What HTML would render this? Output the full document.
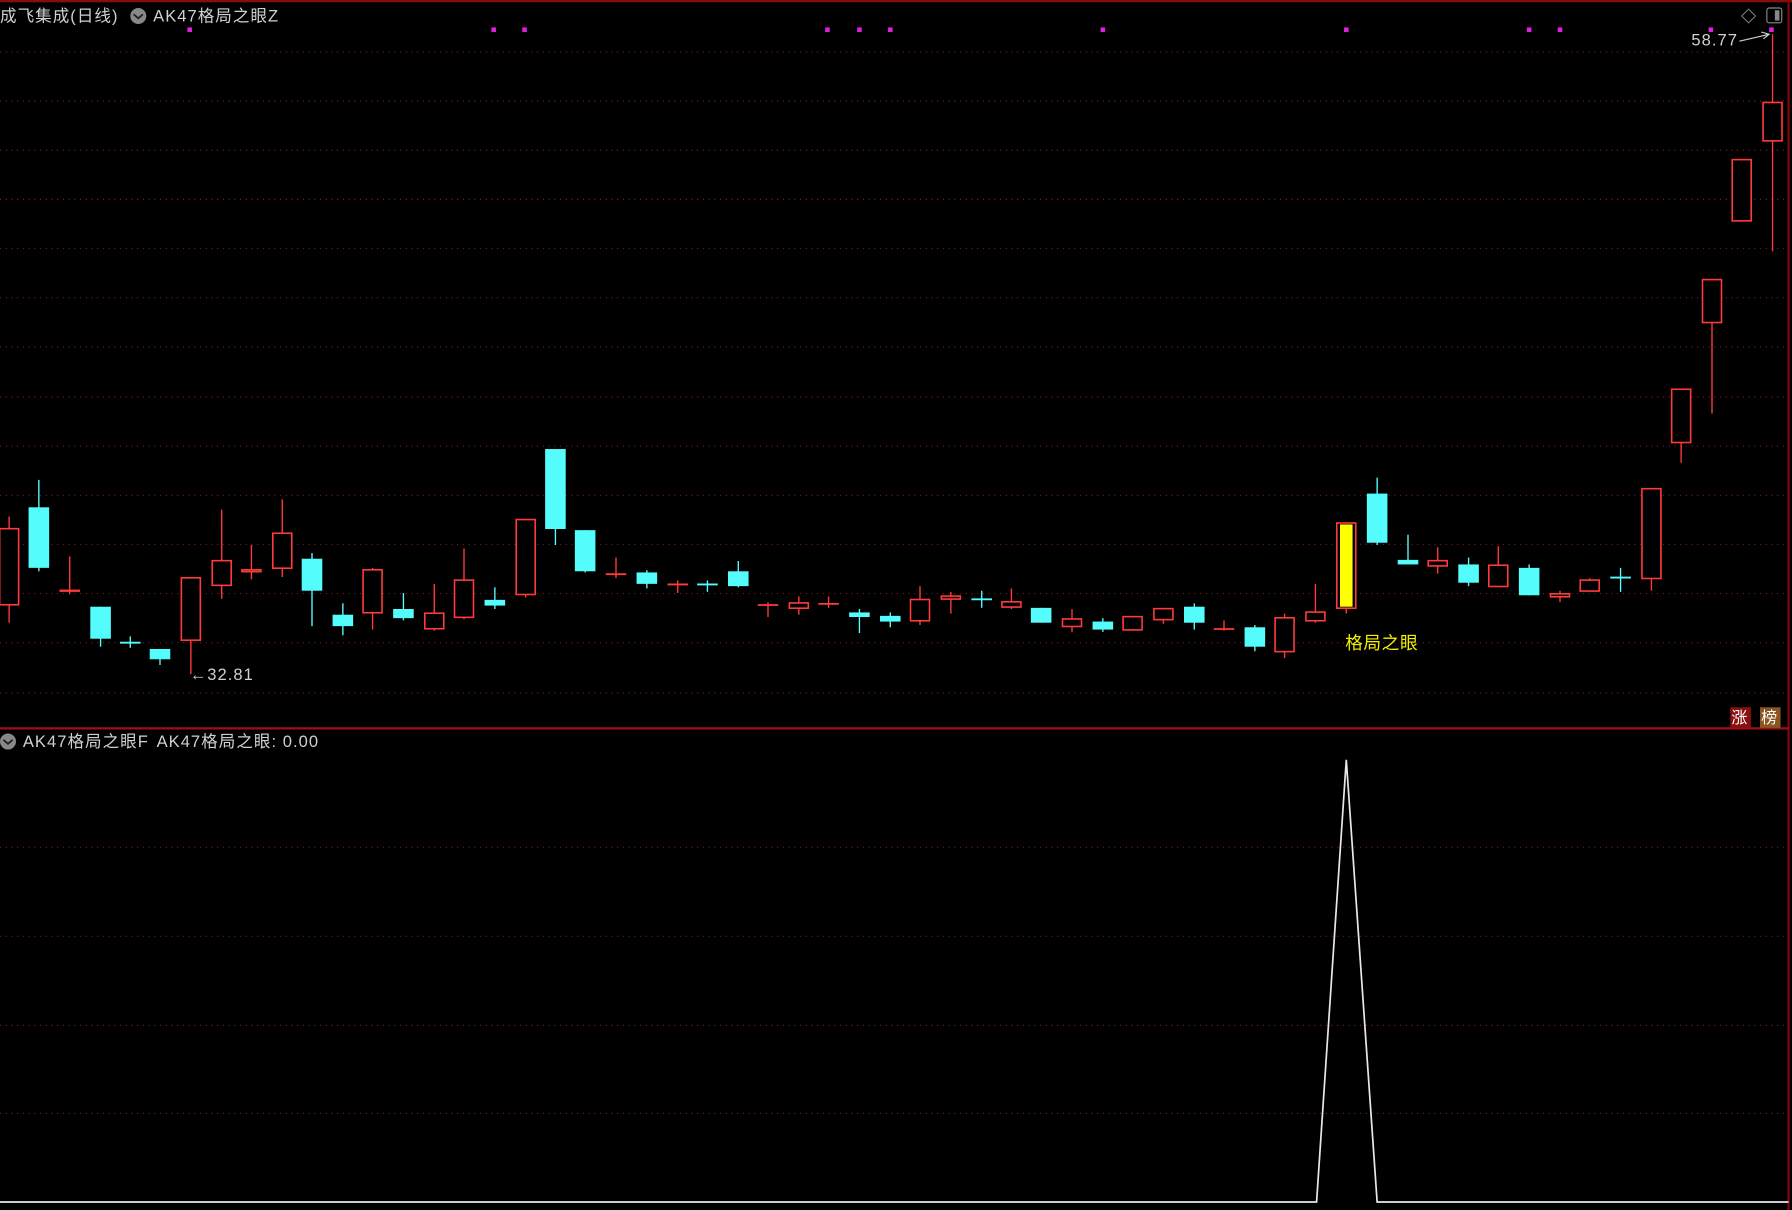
<!DOCTYPE html>
<html><head><meta charset="utf-8">
<style>
html,body{margin:0;padding:0;background:#000;width:1792px;height:1210px;overflow:hidden}
svg{display:block}
text{font-family:"Liberation Sans","Noto Sans CJK SC",sans-serif}
.t{letter-spacing:0.9px;font-size:14.5px}
</style></head>
<body>
<svg id="s" width="1792" height="1210" viewBox="0 0 1568 1059" preserveAspectRatio="none" xmlns="http://www.w3.org/2000/svg">
<rect width="1568" height="1059" fill="#000"/>
<rect x="0" y="0" width="1568" height="2" fill="#8a0d0d"/>
<line x1="1565" y1="0" x2="1565" y2="1059" stroke="#7a0a0a" stroke-width="2"/>
<line x1="0" y1="637.5" x2="1565" y2="637.5" stroke="#a01010" stroke-width="2"/>
<g id="grid" stroke="#7a1a1a" stroke-width="1" stroke-dasharray="1 4"></g>
<g id="c"></g>
<g fill="#e020e0" id="dots"></g>
<text class="t" x="0" y="19" fill="#d0d0d0">成飞集成(日线)</text>
<circle cx="121" cy="14" r="7" fill="#888"/>
<path d="M117 12.5 L121 16 L125 12.5" stroke="#222" stroke-width="1.6" fill="none"/>
<text class="t" x="134" y="19" fill="#d0d0d0">AK47格局之眼Z</text>
<path d="M1530 8 L1536 14 L1530 20 L1524 14Z" stroke="#777" fill="none"/>
<rect x="1546" y="7" width="13" height="13" rx="2" stroke="#888" fill="none"/>
<rect x="1553" y="9" width="4" height="9" fill="#888"/>
<text class="t" x="1480" y="40" fill="#d0d0d0" font-size="13">58.77</text>
<path d="M1522 36 L1548 30 M1541 28 L1548 30 L1543 34" stroke="#d0d0d0" fill="none"/>
<text class="t" x="166" y="595" fill="#d0d0d0">←32.81</text>
<text x="1177" y="568" fill="#f0f000" font-size="15.5" letter-spacing="0.5">格局之眼</text>
<rect x="1514" y="619" width="18" height="18" fill="#8a1010"/>
<text x="1515" y="633" fill="#fff" font-size="14">涨</text>
<rect x="1540" y="619" width="18" height="18" fill="#8a5520"/>
<text x="1541" y="633" fill="#fff" font-size="14">榜</text>
<circle cx="7" cy="649" r="7" fill="#888"/>
<path d="M3 647.5 L7 651 L11 647.5" stroke="#222" stroke-width="1.6" fill="none"/>
<text class="t" x="20" y="654" fill="#d0d0d0">AK47格局之眼F</text>
<text class="t" x="137" y="654" fill="#d0d0d0">AK47格局之眼: 0.00</text>
<polyline points="0,1052 1152,1052 1178,665 1205,1052 1565,1052" stroke="#e8e8e8" stroke-width="1.5" fill="none"/>
</svg>
<script>
var NS="http://www.w3.org/2000/svg";
function el(p,t,a){var e=document.createElementNS(NS,t);for(var k in a)e.setAttribute(k,a[k]);p.appendChild(e);return e;}
var g=document.getElementById("grid");
[45,88,131,174,217,260,303,347,390,433,476,519,562,606,741,819,897,974].forEach(function(y){el(g,"line",{x1:0,y1:y+.5,x2:1563,y2:y+.5});});
var d=document.getElementById("dots");
[166,432,459,724,752,779,965,1178,1338,1365,1497,1550].forEach(function(x){el(d,"rect",{x:x-2,y:24,width:4,height:4});});
var C=[[8,462,530,452,545,"r"],[34,444,497,420,500,"c"],[61,516,518,487,520,"r"],[88,531,559,531,566,"c"],[114,562,563,557,567,"c"],[140,568,577,568,582,"c"],[167,505,561,505,590,"r"],[194,490,513,446,524,"r"],[220,498,501,477,507,"r"],[247,466,498,437,505,"r"],[273,489,517,484,548,"c"],[300,538,548,528,556,"c"],[326,498,537,497,551,"r"],[353,533,541,519,543,"c"],[380,536,551,511,552,"r"],[406,507,541,480,542,"r"],[433,525,530,514,533,"c"],[460,454,521,454,523,"r"],[486,393,463,393,477,"c"],[512,464,500,464,501,"c"],[539,502,503,488,506,"r"],[566,501,511,499,515,"c"],[593,511,512,508,519,"r"],[619,511,512,508,518,"c"],[646,500,513,491,514,"c"],[672,529,530,527,540,"r"],[699,527,533,522,538,"r"],[725,528,529,522,532,"r"],[752,536,540,533,554,"c"],[779,539,544,536,549,"c"],[805,524,544,513,547,"r"],[832,521,525,518,537,"r"],[859,524,525,517,532,"c"],[885,526,532,515,533,"r"],[911,532,545,532,545,"c"],[938,541,549,533,553,"r"],[965,544,551,541,553,"c"],[991,539,552,539,552,"r"],[1018,532,543,532,546,"r"],[1045,531,545,528,551,"c"],[1071,550,551,543,552,"r"],[1098,549,566,547,570,"c"],[1124,540,571,537,576,"r"],[1151,535,544,511,545,"r"],[1178,457,533,457,537,"y"],[1205,432,475,418,477,"c"],[1232,490,494,468,494,"c"],[1258,490,496,479,502,"r"],[1285,494,510,488,513,"c"],[1311,494,514,478,514,"r"],[1338,497,521,494,521,"c"],[1365,519,523,517,527,"r"],[1391,507,518,506,518,"r"],[1418,505,506,497,518,"c"],[1445,427,507,427,517,"r"],[1471,340,388,340,405,"r"],[1498,244,283,244,362,"r"],[1524,139,194,139,194,"r"],[1551,89,124,30,220,"r"]];
var cg=document.getElementById("c");
C.forEach(function(k){var x=k[0],t=k[1],b=k[2],h=k[3],l=k[4],ty=k[5];
 var col=ty=="c"?"#54fcfc":"#ff3a3a";var w=18;
 el(cg,"line",{x1:x,y1:h,x2:x,y2:l,stroke:col,"stroke-width":1.2});
 if(b-t<2){el(cg,"line",{x1:x-w/2,y1:t+.5,x2:x+w/2,y2:t+.5,stroke:col,"stroke-width":1.6});return;}
 if(ty=="c"){el(cg,"rect",{x:x-w/2,y:t,width:w,height:b-t,fill:col});}
 else{el(cg,"rect",{x:x-w/2+.7,y:t+.7,width:w-1.4,height:b-t-1.4,fill:"#000",stroke:col,"stroke-width":1.4});
  if(ty=="y")el(cg,"rect",{x:x-w/2+3.5,y:t+2,width:w-7,height:b-t-4,fill:"#ffff00"});}
});
</script>
</body></html>
